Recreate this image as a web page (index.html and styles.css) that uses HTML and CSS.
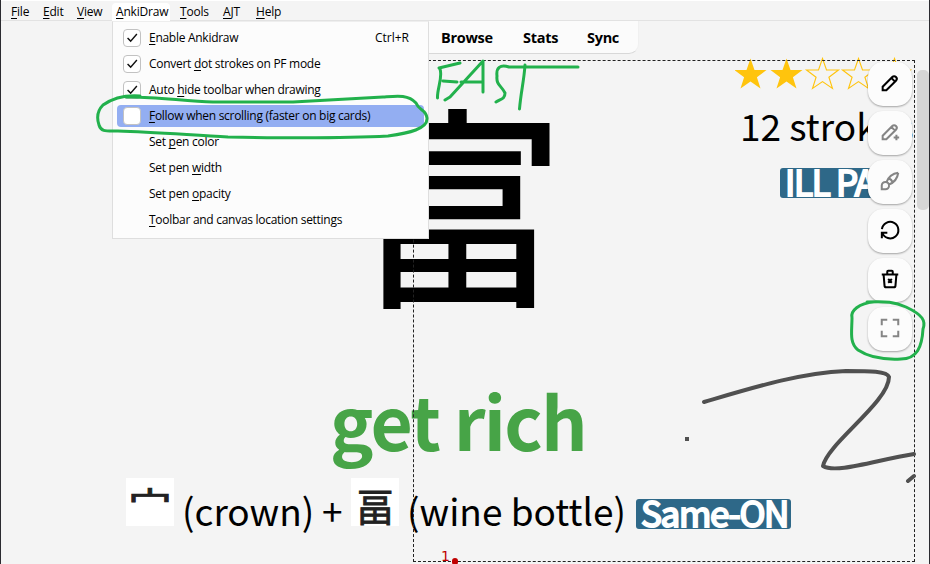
FILE: index.html
```html
<!DOCTYPE html>
<html lang="en">
<head>
<meta charset="utf-8">
<title>AnkiDraw</title>
<link rel="stylesheet" href="styles.css">
</head>
<body>
<div class="window">
  <nav class="menubar">
    <span class="m-file"><u>F</u>ile</span><span class="m-edit"><u>E</u>dit</span><span class="m-view"><u>V</u>iew</span><span class="m-draw open"><u>A</u>nkiDraw</span><span class="m-tools"><u>T</u>ools</span><span class="m-ajt"><u>A</u>JT</span><span class="m-help"><u>H</u>elp</span>
  </nav>
  <div class="tabs"><b class="browse">Browse</b><b class="stats">Stats</b><b class="sync">Sync</b></div>
  <main class="card">
    <div class="top">
      <div class="kanji" lang="ja"><span>富</span></div>
      <aside class="info">
        <svg class="stars" width="180" height="36" viewBox="2.5 0 180 36">
          <defs><path id="star" d="M0 1.5L4 13H16L6.4 20.2L10 31.5L0 24.6L-10 31.5L-6.4 20.2L-16 13H-4Z"/></defs>
          <g fill="#ffc40d"><use href="#star" x="18"/><use href="#star" x="54"/></g>
          <g fill="none" stroke="#ffc40d" stroke-width="1.1"><use href="#star" x="90"/><use href="#star" x="126"/><use href="#star" x="162"/></g>
        </svg>
        <div class="count">12 strokes</div>
        <div class="tag">ILL PART</div>
      </aside>
    </div>
    <h1 class="meaning">get rich</h1>
    <div class="parts">
      <span class="pic crown" lang="ja"><span>宀</span></span>
      <span class="w1">(crown)</span><span class="w2">+</span>
      <span class="pic bottle" lang="ja"><span>畐</span></span>
      <span class="w3">(wine bottle)</span>
      <span class="tag same">Same-ON</span>
    </div>
  </main>
  <div class="scroll"></div>
  <div class="canvas"></div>
  <div class="tools">
    <button><svg viewBox="0 0 24 24"><path d="M4 20h4L18.5 9.5a2.8 2.8 0 0 0-4-4L4 16zM13.5 6.5l4 4"/></svg></button>
    <button class="dim"><svg viewBox="0 0 24 24"><path d="M4 20h4L18.5 9.5a2.8 2.8 0 0 0-4-4L4 16zM13.5 6.5l4 4M16 18h6M19 15v6"/></svg></button>
    <button class="dim"><svg viewBox="0 0 24 24"><path d="M3 21v-4a4 4 0 1 1 4 4zM21 3A16 16 0 0 0 8.200 13.200M21 3A16 16 0 0 1 10.800 15.800M10.600 9a9 9 0 0 1 4.400 4.400"/></svg></button>
    <button><svg viewBox="0 0 24 24"><path d="M3.600 15A9 9 0 1 0 3.200 11M3.100 21v-6h6"/></svg></button>
    <button><svg viewBox="0 0 24 24"><path d="M3 7h18M5 7l1 12a2 2 0 0 0 2 2h8a2 2 0 0 0 2-2L19 7M9 7V4a1 1 0 0 1 1-1h4a1 1 0 0 1 1 1v3M10 12l4 4M14 12l-4 4"/></svg></button>
    <button class="dim"><svg viewBox="0 0 24 24"><path d="M3 9V3h6M15 3h6v6M21 15v6h-6M9 21H3v-6"/></svg></button>
  </div>
  <div class="menu">
    <div class="item"><i class="check"><svg viewBox="0 0 18 18"><path d="M4 9l3.500 3.500 7-8"/></svg></i><span class="t1"><u>E</u>nable Ankidraw</span><span class="key">Ctrl+R</span></div>
    <div class="item"><i class="check"><svg viewBox="0 0 18 18"><path d="M4 9l3.500 3.500 7-8"/></svg></i><span class="t2">Convert <u>d</u>ot strokes on PF mode</span></div>
    <div class="item"><i class="check"><svg viewBox="0 0 18 18"><path d="M4 9l3.500 3.500 7-8"/></svg></i><span class="t3">Auto <u>h</u>ide toolbar when drawing</span></div>
    <div class="item active"><i class="check"></i><span class="t4"><u>F</u>ollow when scrolling (faster on big cards)</span></div>
    <div class="item"><i></i><span class="t5">Set <u>p</u>en color</span></div>
    <div class="item"><i></i><span class="t6">Set pen <u>w</u>idth</span></div>
    <div class="item"><i></i><span class="t7">Set pen <u>o</u>pacity</span></div>
    <div class="item"><i></i><span class="t8"><u>T</u>oolbar and canvas location settings</span></div>
  </div>
  <svg class="ink" width="930" height="564" viewBox="0 0 930 564">
    <g class="pen">
      <path d="M704 402C755 387 800 373 846 371C870 371 887 371 889 377C889 402 827 444 823 466C836 474 876 460 914 454M908 481L914 476"/>
      <rect class="dot" x="685" y="437" width="4" height="4"/>
    </g>
    <g class="marker">
      <path d="M140 96C126 95 113 98 103 105C97 111 97 119 99 125C101 132 106 131 118 131C152 132 190 135 228 137C285 138 350 138 388 136C409 133 428 129 427 118C426 109 419 111 416 103C408 94 396 96 383 97L293 102H213C184 101 150 96 126 97"/>
      <path d="M439 68L460 63M440 69C443 77 437 89 437.500 98M443 81L457 82M445 100L450 97L483 61V92M461 82H482M578 67H509C500 64 496 68 497 76C496 85 501 85 505 93C505 99 501 99 496 102M525 65C524 81 521 91 519.500 109"/>
      <path d="M867 302C886 301 895 302 906 307C923 315 926 321 923 329C922 347 917 359 901 359C882 360 867 356 858 350C849 343 852 331 852 318C850 311 859 303 874 302"/>
    </g>
  </svg>
  <div class="order"><span>1</span><i></i></div>
</div>
</body>
</html>
```
FILE: styles.css
```css
* { box-sizing: border-box; }
body { margin: 0; background: #f4f4f4; color: #000; }
.window { position: relative; width: 930px; height: 564px; overflow: hidden; border-left: 1px solid #2b2b30; border-right: 1px solid #2b2b30; background: #f4f4f4; font-family: "Noto Sans CJK JP", sans-serif; }
.menubar { display: flex; height: 21px; padding: 2px 0 0 6px; border-top: 1px solid #fff; border-bottom: 1px solid #e2e2e2; font: 12px/18px "Open Sans", sans-serif; letter-spacing: -.2px; }
.menubar span { height: 18px; padding-left: 4px; border-radius: 4px 4px 0 0; white-space: nowrap; }
u { text-underline-offset: 2px; text-decoration-thickness: 1px; text-decoration-skip-ink: none; }
.m-file { width: 32px; }
.m-edit { width: 34px; }
.m-view { width: 39px; }
.m-draw { width: 58px; margin-right: 6px; }
.m-tools { width: 43px; }
.m-ajt { width: 33px; }
.open { background: #fff; }
.tabs { display: flex; width: 338px; height: 33px; margin-left: 300px; padding-left: 140px; background: #fbfbfb; border-bottom: 1px solid #d8d8d8; border-right: 1px solid #f0f0f0; border-radius: 0 0 10px 0; font: 14.500px/33px "Open Sans", sans-serif; letter-spacing: -.3px; }
.browse { width: 82px; }
.stats { width: 64px; }
.card { width: 913px; }
.top { display: flex; height: 326px; }
.kanji { width: 732px; padding-left: 350px; height: 326px; }
.kanji span { display: block; width: 215px; font-size: 214px; line-height: 216px; font-weight: 400; margin-top: 35px; -webkit-text-stroke: 2px #000; }
.info { width: 179px; margin-left: 2px; overflow: hidden; white-space: nowrap; }
.stars { display: block; margin-top: 3px; }
.count { margin-left: 5px; font-size: 37px; line-height: 60px; height: 75px; padding-top: 2px; }
.tag { height: 30px; border-radius: 3px; background: #2e6888; color: #fff; font-weight: 400; -webkit-text-stroke: 2px #fff; font-size: 35px; letter-spacing: -1.3px; line-height: 26px; white-space: nowrap; }
.info .tag { margin-left: 45px; padding-left: 5px; width: 130px; overflow: hidden; }
.meaning { margin: 0; height: 98px; padding-left: 329px; color: #47a447; font-size: 73px; letter-spacing: -1.8px; line-height: 78px; font-weight: 700; white-space: nowrap; }
.parts { display: flex; height: 60px; padding-left: 125px; font-size: 37px; line-height: 64px; white-space: nowrap; }
.pic { width: 48px; height: 48px; background: #fff; color: #222; text-align: center; }
.pic span { display: block; width: 48px; height: 48px; }
.crown span { font-size: 44px; line-height: 48px; transform-origin: 50% 0; transform: translateY(1px) scaleY(.75); font-weight: 400; -webkit-text-stroke: 1px #222; }
.bottle span { font-size: 38px; line-height: 53px; font-weight: 400; -webkit-text-stroke: .8px #222; }
.w1 { width: 138px; padding-left: 8px; }
.w2 { width: 39px; padding-left: 10px; }
.w3 { width: 237px; padding-left: 8px; }
.same { width: 155px; padding-left: 5px; margin-top: 21px; }
.scroll { position: absolute; left: 916px; top: 70px; width: 12px; height: 140px; border-radius: 5px; background: #d6d6d6; }
.canvas { position: absolute; left: 412px; top: 60px; width: 502px; height: 502px; border: 1px dashed #222; }
.tools { position: absolute; left: 867px; top: 62px; display: grid; gap: 5px; }
.tools button { display: grid; place-items: center; width: 44px; height: 44px; padding: 0 0 2px; border: 0; border-radius: 15px; background: #fcfcfc; box-shadow: 0 1px 2px #0005; }
.tools svg { width: 22px; height: 22px; fill: none; stroke: #000; stroke-width: 2.2; }
.tools .dim svg { stroke: #858585; }
.menu { position: absolute; left: 111px; top: 21px; width: 317px; height: 218px; padding: 5px 4px; border: 1px solid #dedede; border-top-color: #eee; background: #fcfcfc; font: 12px/22px "Open Sans", sans-serif; letter-spacing: -.28px; }
.item { display: flex; align-items: center; height: 22px; margin-bottom: 4px; padding: 0 15px 0 6px; border-radius: 4px; white-space: nowrap; }
.item i { width: 18px; height: 18px; margin-right: 8px; }
.item .check { border: 1px solid #c2c2c2; border-radius: 4px; background: #fff; }
.check svg { display: block; width: 16px; height: 16px; fill: none; stroke: #111; stroke-width: 1.6; }
.active { background: #93aef2; }
.key { margin-left: auto; letter-spacing: 0; }
.ink { position: absolute; left: -1px; top: 0; fill: none; stroke-linecap: round; stroke-linejoin: round; }
.pen { stroke: #505050; stroke-width: 4; }
.pen .dot { fill: #505050; stroke: none; }
.marker { stroke: #22b14c; stroke-width: 3; }
.order { position: absolute; left: 440px; top: 548px; display: flex; color: #c00000; font: 14px/17px "DejaVu Sans", sans-serif; }
.order i { width: 6px; height: 7px; margin: 10px 0 0 2px; border-radius: 3px; background: #c00000; }
```
